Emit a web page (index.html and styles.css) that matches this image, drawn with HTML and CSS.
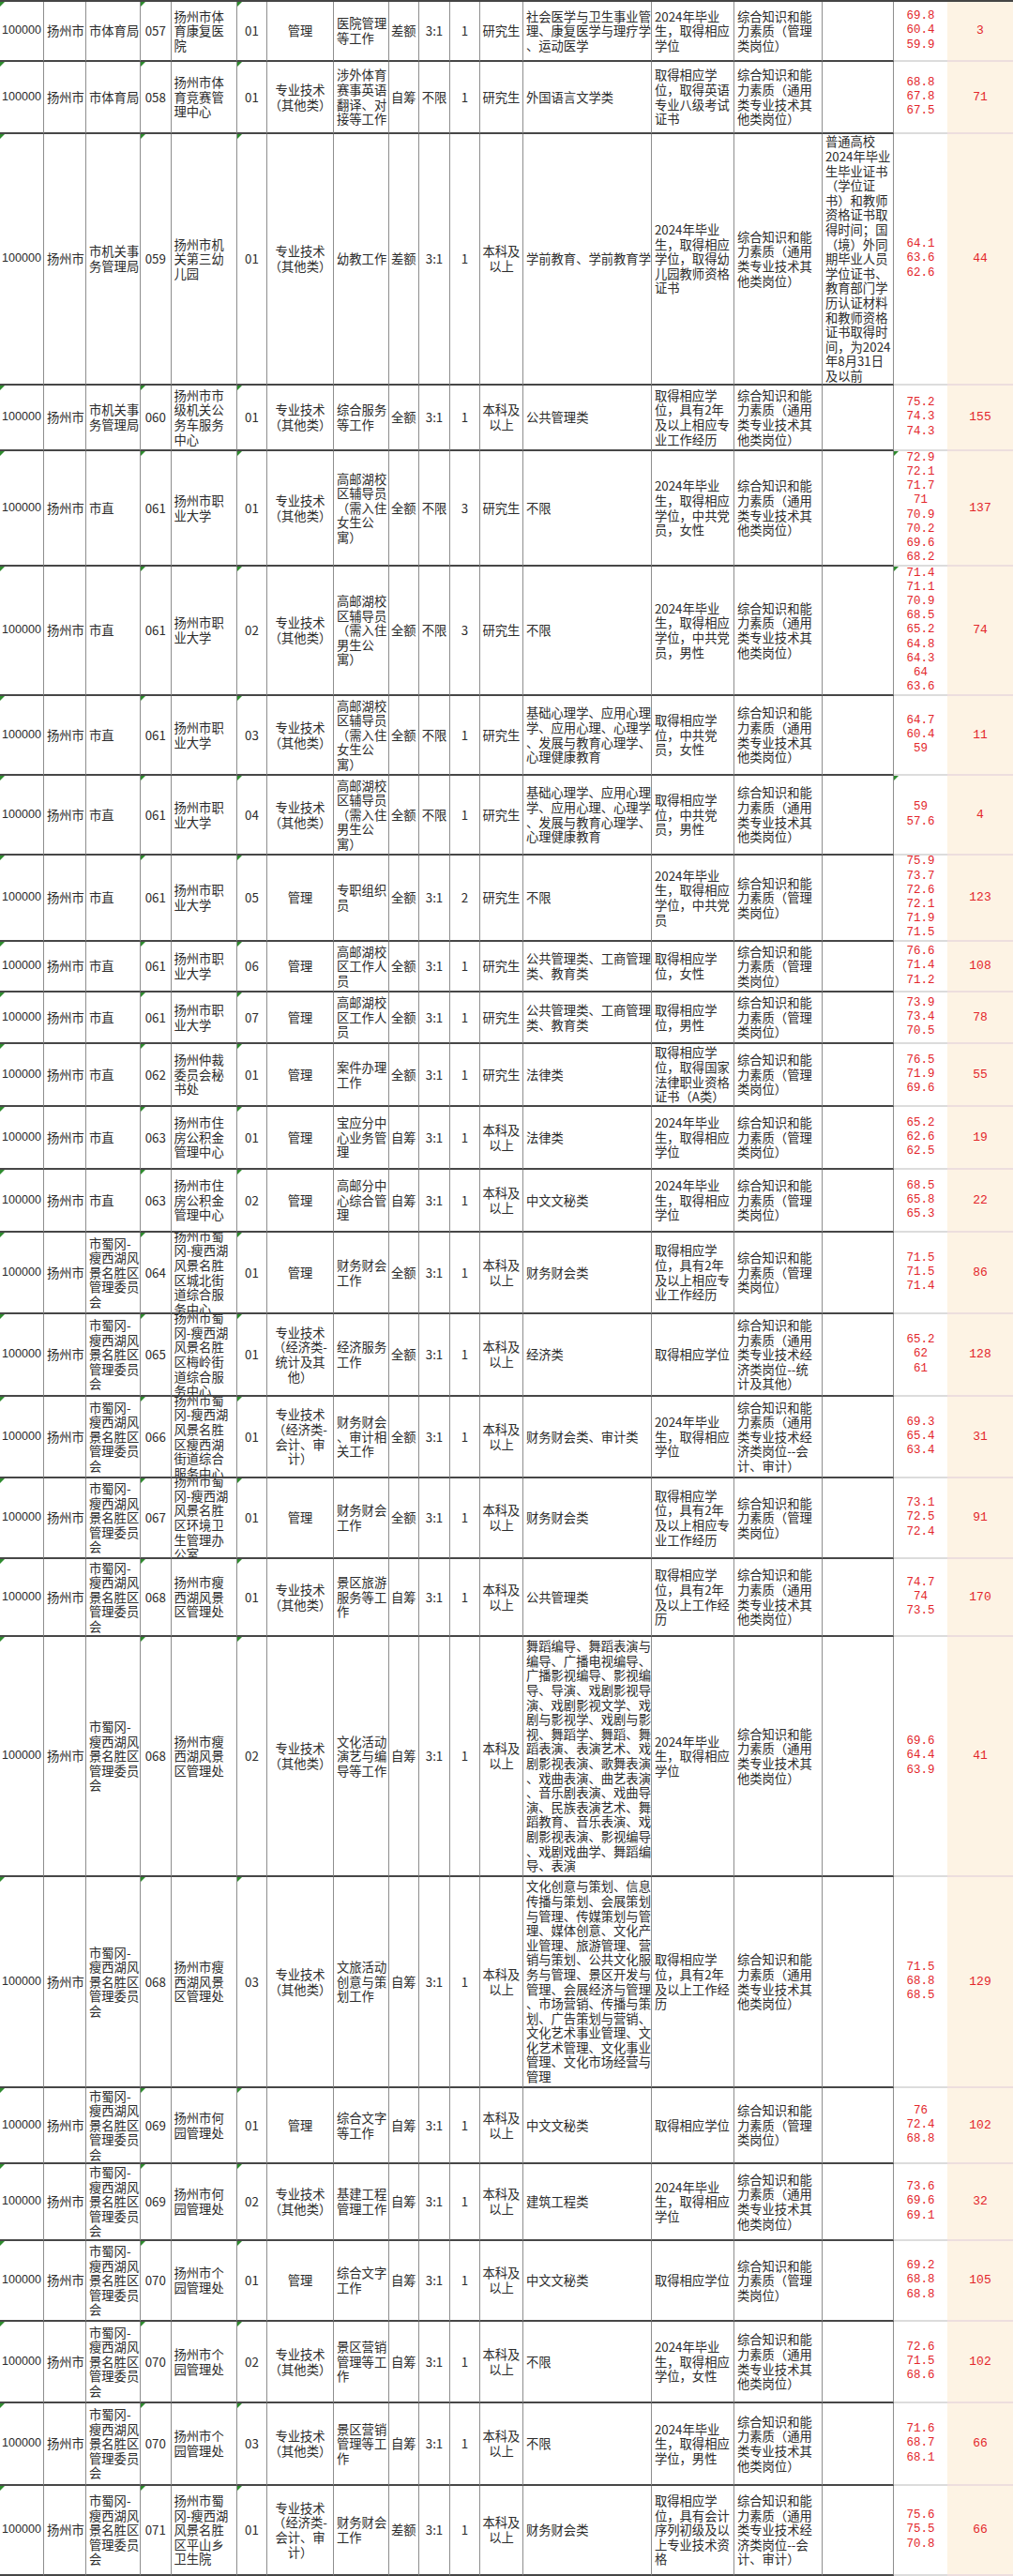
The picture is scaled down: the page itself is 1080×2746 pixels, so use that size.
FILE: index.html
```html
<!DOCTYPE html>
<html lang="zh-CN">
<head>
<meta charset="utf-8">
<title>岗位表</title>
<link rel="stylesheet" href="styles.css">
</head>
<body>
<div class="sheet">

<div class="row h64">
<div class="c m num">100000</div><div class="c">扬州市</div><div class="c">市体育局</div><div class="c m ct">057</div>
<div class="c">扬州市体<br>育康复医<br>院</div><div class="c m ct">01</div><div class="c ct">管理</div>
<div class="c">医院管理<br>等工作</div><div class="c ct">差额</div><div class="c ct">3:1</div><div class="c ct">1</div><div class="c ct">研究生</div>
<div class="c">社会医学与卫生事业管<br>理、康复医学与理疗学<br>、运动医学</div>
<div class="c">2024年毕业<br>生，取得相应<br>学位</div>
<div class="c">综合知识和能<br>力素质（管理<br>类岗位）</div><div class="c"></div>
<div class="c sc">69.8<br>60.4<br>59.9</div><div class="c cnt">3</div>
</div>

<div class="row h77">
<div class="c m num">100000</div><div class="c">扬州市</div><div class="c">市体育局</div><div class="c m ct">058</div>
<div class="c">扬州市体<br>育竞赛管<br>理中心</div><div class="c m ct">01</div><div class="c ct">专业技术<br>（其他类）</div>
<div class="c">涉外体育<br>赛事英语<br>翻译、对<br>接等工作</div><div class="c ct">自筹</div><div class="c ct">不限</div><div class="c ct">1</div><div class="c ct">研究生</div>
<div class="c">外国语言文学类</div>
<div class="c">取得相应学<br>位，取得英语<br>专业八级考试<br>证书</div>
<div class="c">综合知识和能<br>力素质（通用<br>类专业技术其<br>他类岗位）</div><div class="c"></div>
<div class="c sc">68.8<br>67.8<br>67.5</div><div class="c cnt">71</div>
</div>

<div class="row h268">
<div class="c m num">100000</div><div class="c">扬州市</div><div class="c">市机关事<br>务管理局</div><div class="c m ct">059</div>
<div class="c">扬州市机<br>关第三幼<br>儿园</div><div class="c m ct">01</div><div class="c ct">专业技术<br>（其他类）</div>
<div class="c">幼教工作</div><div class="c ct">差额</div><div class="c ct">3:1</div><div class="c ct">1</div><div class="c ct">本科及<br>以上</div>
<div class="c">学前教育、学前教育学</div>
<div class="c">2024年毕业<br>生，取得相应<br>学位，取得幼<br>儿园教师资格<br>证书</div>
<div class="c">综合知识和能<br>力素质（通用<br>类专业技术其<br>他类岗位）</div>
<div class="c">普通高校<br>2024年毕业<br>生毕业证书<br>（学位证<br>书）和教师<br>资格证书取<br>得时间；国<br>（境）外同<br>期毕业人员<br>学位证书、<br>教育部门学<br>历认证材料<br>和教师资格<br>证书取得时<br>间，为2024<br>年8月31日<br>及以前</div>
<div class="c sc">64.1<br>63.6<br>62.6</div><div class="c cnt">44</div>
</div>

<div class="row h70">
<div class="c m num">100000</div><div class="c">扬州市</div><div class="c">市机关事<br>务管理局</div><div class="c m ct">060</div>
<div class="c">扬州市市<br>级机关公<br>务车服务<br>中心</div><div class="c m ct">01</div><div class="c ct">专业技术<br>（其他类）</div>
<div class="c">综合服务<br>等工作</div><div class="c ct">全额</div><div class="c ct">3:1</div><div class="c ct">1</div><div class="c ct">本科及<br>以上</div>
<div class="c">公共管理类</div>
<div class="c">取得相应学<br>位，具有2年<br>及以上相应专<br>业工作经历</div>
<div class="c">综合知识和能<br>力素质（通用<br>类专业技术其<br>他类岗位）</div><div class="c"></div>
<div class="c sc">75.2<br>74.3<br>74.3</div><div class="c cnt">155</div>
</div>

<div class="row h123">
<div class="c m num">100000</div><div class="c">扬州市</div><div class="c">市直</div><div class="c m ct">061</div>
<div class="c">扬州市职<br>业大学</div><div class="c m ct">01</div><div class="c ct">专业技术<br>（其他类）</div>
<div class="c">高邮湖校<br>区辅导员<br>（需入住<br>女生公<br>寓）</div><div class="c ct">全额</div><div class="c ct">不限</div><div class="c ct">3</div><div class="c ct">研究生</div>
<div class="c">不限</div>
<div class="c">2024年毕业<br>生，取得相应<br>学位，中共党<br>员，女性</div>
<div class="c">综合知识和能<br>力素质（通用<br>类专业技术其<br>他类岗位）</div><div class="c"></div>
<div class="c sc m">72.9<br>72.1<br>71.7<br>71<br>70.9<br>70.2<br>69.6<br>68.2</div><div class="c cnt">137</div>
</div>

<div class="row h138">
<div class="c m num">100000</div><div class="c">扬州市</div><div class="c">市直</div><div class="c m ct">061</div>
<div class="c">扬州市职<br>业大学</div><div class="c m ct">02</div><div class="c ct">专业技术<br>（其他类）</div>
<div class="c">高邮湖校<br>区辅导员<br>（需入住<br>男生公<br>寓）</div><div class="c ct">全额</div><div class="c ct">不限</div><div class="c ct">3</div><div class="c ct">研究生</div>
<div class="c">不限</div>
<div class="c">2024年毕业<br>生，取得相应<br>学位，中共党<br>员，男性</div>
<div class="c">综合知识和能<br>力素质（通用<br>类专业技术其<br>他类岗位）</div><div class="c"></div>
<div class="c sc m">71.4<br>71.1<br>70.9<br>68.5<br>65.2<br>64.8<br>64.3<br>64<br>63.6</div><div class="c cnt">74</div>
</div>

<div class="row h85">
<div class="c m num">100000</div><div class="c">扬州市</div><div class="c">市直</div><div class="c m ct">061</div>
<div class="c">扬州市职<br>业大学</div><div class="c m ct">03</div><div class="c ct">专业技术<br>（其他类）</div>
<div class="c">高邮湖校<br>区辅导员<br>（需入住<br>女生公<br>寓）</div><div class="c ct">全额</div><div class="c ct">不限</div><div class="c ct">1</div><div class="c ct">研究生</div>
<div class="c">基础心理学、应用心理<br>学、应用心理、心理学<br>、发展与教育心理学、<br>心理健康教育</div>
<div class="c">取得相应学<br>位，中共党<br>员，女性</div>
<div class="c">综合知识和能<br>力素质（通用<br>类专业技术其<br>他类岗位）</div><div class="c"></div>
<div class="c sc">64.7<br>60.4<br>59</div><div class="c cnt">11</div>
</div>

<div class="row h85">
<div class="c m num">100000</div><div class="c">扬州市</div><div class="c">市直</div><div class="c m ct">061</div>
<div class="c">扬州市职<br>业大学</div><div class="c m ct">04</div><div class="c ct">专业技术<br>（其他类）</div>
<div class="c">高邮湖校<br>区辅导员<br>（需入住<br>男生公<br>寓）</div><div class="c ct">全额</div><div class="c ct">不限</div><div class="c ct">1</div><div class="c ct">研究生</div>
<div class="c">基础心理学、应用心理<br>学、应用心理、心理学<br>、发展与教育心理学、<br>心理健康教育</div>
<div class="c">取得相应学<br>位，中共党<br>员，男性</div>
<div class="c">综合知识和能<br>力素质（通用<br>类专业技术其<br>他类岗位）</div><div class="c"></div>
<div class="c sc m">59<br>57.6</div><div class="c cnt">4</div>
</div>

<div class="row h92">
<div class="c m num">100000</div><div class="c">扬州市</div><div class="c">市直</div><div class="c m ct">061</div>
<div class="c">扬州市职<br>业大学</div><div class="c m ct">05</div><div class="c ct">管理</div>
<div class="c">专职组织<br>员</div><div class="c ct">全额</div><div class="c ct">3:1</div><div class="c ct">2</div><div class="c ct">研究生</div>
<div class="c">不限</div>
<div class="c">2024年毕业<br>生，取得相应<br>学位，中共党<br>员</div>
<div class="c">综合知识和能<br>力素质（管理<br>类岗位）</div><div class="c"></div>
<div class="c sc">75.9<br>73.7<br>72.6<br>72.1<br>71.9<br>71.5</div><div class="c cnt">123</div>
</div>

<div class="row h54">
<div class="c m num">100000</div><div class="c">扬州市</div><div class="c">市直</div><div class="c m ct">061</div>
<div class="c">扬州市职<br>业大学</div><div class="c m ct">06</div><div class="c ct">管理</div>
<div class="c">高邮湖校<br>区工作人<br>员</div><div class="c ct">全额</div><div class="c ct">3:1</div><div class="c ct">1</div><div class="c ct">研究生</div>
<div class="c">公共管理类、工商管理<br>类、教育类</div>
<div class="c">取得相应学<br>位，女性</div>
<div class="c">综合知识和能<br>力素质（管理<br>类岗位）</div><div class="c"></div>
<div class="c sc">76.6<br>71.4<br>71.2</div><div class="c cnt">108</div>
</div>

<div class="row h55">
<div class="c m num">100000</div><div class="c">扬州市</div><div class="c">市直</div><div class="c m ct">061</div>
<div class="c">扬州市职<br>业大学</div><div class="c m ct">07</div><div class="c ct">管理</div>
<div class="c">高邮湖校<br>区工作人<br>员</div><div class="c ct">全额</div><div class="c ct">3:1</div><div class="c ct">1</div><div class="c ct">研究生</div>
<div class="c">公共管理类、工商管理<br>类、教育类</div>
<div class="c">取得相应学<br>位，男性</div>
<div class="c">综合知识和能<br>力素质（管理<br>类岗位）</div><div class="c"></div>
<div class="c sc">73.9<br>73.4<br>70.5</div><div class="c cnt">78</div>
</div>

<div class="row h67">
<div class="c m num">100000</div><div class="c">扬州市</div><div class="c">市直</div><div class="c m ct">062</div>
<div class="c">扬州仲裁<br>委员会秘<br>书处</div><div class="c m ct">01</div><div class="c ct">管理</div>
<div class="c">案件办理<br>工作</div><div class="c ct">全额</div><div class="c ct">3:1</div><div class="c ct">1</div><div class="c ct">研究生</div>
<div class="c">法律类</div>
<div class="c">取得相应学<br>位，取得国家<br>法律职业资格<br>证书（A类）</div>
<div class="c">综合知识和能<br>力素质（管理<br>类岗位）</div><div class="c"></div>
<div class="c sc">76.5<br>71.9<br>69.6</div><div class="c cnt">55</div>
</div>

<div class="row h67">
<div class="c m num">100000</div><div class="c">扬州市</div><div class="c">市直</div><div class="c m ct">063</div>
<div class="c">扬州市住<br>房公积金<br>管理中心</div><div class="c m ct">01</div><div class="c ct">管理</div>
<div class="c">宝应分中<br>心业务管<br>理</div><div class="c ct">自筹</div><div class="c ct">3:1</div><div class="c ct">1</div><div class="c ct">本科及<br>以上</div>
<div class="c">法律类</div>
<div class="c">2024年毕业<br>生，取得相应<br>学位</div>
<div class="c">综合知识和能<br>力素质（管理<br>类岗位）</div><div class="c"></div>
<div class="c sc">65.2<br>62.6<br>62.5</div><div class="c cnt">19</div>
</div>

<div class="row h67">
<div class="c m num">100000</div><div class="c">扬州市</div><div class="c">市直</div><div class="c m ct">063</div>
<div class="c">扬州市住<br>房公积金<br>管理中心</div><div class="c m ct">02</div><div class="c ct">管理</div>
<div class="c">高邮分中<br>心综合管<br>理</div><div class="c ct">自筹</div><div class="c ct">3:1</div><div class="c ct">1</div><div class="c ct">本科及<br>以上</div>
<div class="c">中文文秘类</div>
<div class="c">2024年毕业<br>生，取得相应<br>学位</div>
<div class="c">综合知识和能<br>力素质（管理<br>类岗位）</div><div class="c"></div>
<div class="c sc">68.5<br>65.8<br>65.3</div><div class="c cnt">22</div>
</div>

<div class="row h87">
<div class="c m num">100000</div><div class="c">扬州市</div><div class="c">市蜀冈-<br>瘦西湖风<br>景名胜区<br>管理委员<br>会</div><div class="c m ct">064</div>
<div class="c">扬州市蜀<br>冈-瘦西湖<br>风景名胜<br>区城北街<br>道综合服<br>务中心</div><div class="c m ct">01</div><div class="c ct">管理</div>
<div class="c">财务财会<br>工作</div><div class="c ct">全额</div><div class="c ct">3:1</div><div class="c ct">1</div><div class="c ct">本科及<br>以上</div>
<div class="c">财务财会类</div>
<div class="c">取得相应学<br>位，具有2年<br>及以上相应专<br>业工作经历</div>
<div class="c">综合知识和能<br>力素质（管理<br>类岗位）</div><div class="c"></div>
<div class="c sc">71.5<br>71.5<br>71.4</div><div class="c cnt">86</div>
</div>

<div class="row h88">
<div class="c m num">100000</div><div class="c">扬州市</div><div class="c">市蜀冈-<br>瘦西湖风<br>景名胜区<br>管理委员<br>会</div><div class="c m ct">065</div>
<div class="c">扬州市蜀<br>冈-瘦西湖<br>风景名胜<br>区梅岭街<br>道综合服<br>务中心</div><div class="c m ct">01</div><div class="c ct">专业技术<br>（经济类-<br>统计及其<br>他）</div>
<div class="c">经济服务<br>工作</div><div class="c ct">全额</div><div class="c ct">3:1</div><div class="c ct">1</div><div class="c ct">本科及<br>以上</div>
<div class="c">经济类</div>
<div class="c">取得相应学位</div>
<div class="c">综合知识和能<br>力素质（通用<br>类专业技术经<br>济类岗位--统<br>计及其他）</div><div class="c"></div>
<div class="c sc">65.2<br>62<br>61</div><div class="c cnt">128</div>
</div>

<div class="row h87">
<div class="c m num">100000</div><div class="c">扬州市</div><div class="c">市蜀冈-<br>瘦西湖风<br>景名胜区<br>管理委员<br>会</div><div class="c m ct">066</div>
<div class="c">扬州市蜀<br>冈-瘦西湖<br>风景名胜<br>区瘦西湖<br>街道综合<br>服务中心</div><div class="c m ct">01</div><div class="c ct">专业技术<br>（经济类-<br>会计、审<br>计）</div>
<div class="c">财务财会<br>、审计相<br>关工作</div><div class="c ct">全额</div><div class="c ct">3:1</div><div class="c ct">1</div><div class="c ct">本科及<br>以上</div>
<div class="c">财务财会类、审计类</div>
<div class="c">2024年毕业<br>生，取得相应<br>学位</div>
<div class="c">综合知识和能<br>力素质（通用<br>类专业技术经<br>济类岗位--会<br>计、审计）</div><div class="c"></div>
<div class="c sc">69.3<br>65.4<br>63.4</div><div class="c cnt">31</div>
</div>

<div class="row h86">
<div class="c m num">100000</div><div class="c">扬州市</div><div class="c">市蜀冈-<br>瘦西湖风<br>景名胜区<br>管理委员<br>会</div><div class="c m ct">067</div>
<div class="c">扬州市蜀<br>冈-瘦西湖<br>风景名胜<br>区环境卫<br>生管理办<br>公室</div><div class="c m ct">01</div><div class="c ct">管理</div>
<div class="c">财务财会<br>工作</div><div class="c ct">全额</div><div class="c ct">3:1</div><div class="c ct">1</div><div class="c ct">本科及<br>以上</div>
<div class="c">财务财会类</div>
<div class="c">取得相应学<br>位，具有2年<br>及以上相应专<br>业工作经历</div>
<div class="c">综合知识和能<br>力素质（管理<br>类岗位）</div><div class="c"></div>
<div class="c sc">73.1<br>72.5<br>72.4</div><div class="c cnt">91</div>
</div>

<div class="row h83">
<div class="c m num">100000</div><div class="c">扬州市</div><div class="c">市蜀冈-<br>瘦西湖风<br>景名胜区<br>管理委员<br>会</div><div class="c m ct">068</div>
<div class="c">扬州市瘦<br>西湖风景<br>区管理处</div><div class="c m ct">01</div><div class="c ct">专业技术<br>（其他类）</div>
<div class="c">景区旅游<br>服务等工<br>作</div><div class="c ct">自筹</div><div class="c ct">3:1</div><div class="c ct">1</div><div class="c ct">本科及<br>以上</div>
<div class="c">公共管理类</div>
<div class="c">取得相应学<br>位，具有2年<br>及以上工作经<br>历</div>
<div class="c">综合知识和能<br>力素质（通用<br>类专业技术其<br>他类岗位）</div><div class="c"></div>
<div class="c sc">74.7<br>74<br>73.5</div><div class="c cnt">170</div>
</div>

<div class="row h256">
<div class="c m num">100000</div><div class="c">扬州市</div><div class="c">市蜀冈-<br>瘦西湖风<br>景名胜区<br>管理委员<br>会</div><div class="c m ct">068</div>
<div class="c">扬州市瘦<br>西湖风景<br>区管理处</div><div class="c m ct">02</div><div class="c ct">专业技术<br>（其他类）</div>
<div class="c">文化活动<br>演艺与编<br>导等工作</div><div class="c ct">自筹</div><div class="c ct">3:1</div><div class="c ct">1</div><div class="c ct">本科及<br>以上</div>
<div class="c">舞蹈编导、舞蹈表演与<br>编导、广播电视编导、<br>广播影视编导、影视编<br>导、导演、戏剧影视导<br>演、戏剧影视文学、戏<br>剧与影视学、戏剧与影<br>视、舞蹈学、舞蹈、舞<br>蹈表演、表演艺术、戏<br>剧影视表演、歌舞表演<br>、戏曲表演、曲艺表演<br>、音乐剧表演、戏曲导<br>演、民族表演艺术、舞<br>蹈教育、音乐表演、戏<br>剧影视表演、影视编导<br>、戏剧戏曲学、舞蹈编<br>导、表演</div>
<div class="c">2024年毕业<br>生，取得相应<br>学位</div>
<div class="c">综合知识和能<br>力素质（通用<br>类专业技术其<br>他类岗位）</div><div class="c"></div>
<div class="c sc">69.6<br>64.4<br>63.9</div><div class="c cnt">41</div>
</div>

<div class="row h225">
<div class="c m num">100000</div><div class="c">扬州市</div><div class="c">市蜀冈-<br>瘦西湖风<br>景名胜区<br>管理委员<br>会</div><div class="c m ct">068</div>
<div class="c">扬州市瘦<br>西湖风景<br>区管理处</div><div class="c m ct">03</div><div class="c ct">专业技术<br>（其他类）</div>
<div class="c">文旅活动<br>创意与策<br>划工作</div><div class="c ct">自筹</div><div class="c ct">3:1</div><div class="c ct">1</div><div class="c ct">本科及<br>以上</div>
<div class="c">文化创意与策划、信息<br>传播与策划、会展策划<br>与管理、传媒策划与管<br>理、媒体创意、文化产<br>业管理、旅游管理、营<br>销与策划、公共文化服<br>务与管理、景区开发与<br>管理、会展经济与管理<br>、市场营销、传播与策<br>划、广告策划与营销、<br>文化艺术事业管理、文<br>化艺术管理、文化事业<br>管理、文化市场经营与<br>管理</div>
<div class="c">取得相应学<br>位，具有2年<br>及以上工作经<br>历</div>
<div class="c">综合知识和能<br>力素质（通用<br>类专业技术其<br>他类岗位）</div><div class="c"></div>
<div class="c sc">71.5<br>68.8<br>68.5</div><div class="c cnt">129</div>
</div>

<div class="row h81">
<div class="c m num">100000</div><div class="c">扬州市</div><div class="c">市蜀冈-<br>瘦西湖风<br>景名胜区<br>管理委员<br>会</div><div class="c m ct">069</div>
<div class="c">扬州市何<br>园管理处</div><div class="c m ct">01</div><div class="c ct">管理</div>
<div class="c">综合文字<br>等工作</div><div class="c ct">自筹</div><div class="c ct">3:1</div><div class="c ct">1</div><div class="c ct">本科及<br>以上</div>
<div class="c">中文文秘类</div>
<div class="c">取得相应学位</div>
<div class="c">综合知识和能<br>力素质（管理<br>类岗位）</div><div class="c"></div>
<div class="c sc">76<br>72.4<br>68.8</div><div class="c cnt">102</div>
</div>

<div class="row h82">
<div class="c m num">100000</div><div class="c">扬州市</div><div class="c">市蜀冈-<br>瘦西湖风<br>景名胜区<br>管理委员<br>会</div><div class="c m ct">069</div>
<div class="c">扬州市何<br>园管理处</div><div class="c m ct">02</div><div class="c ct">专业技术<br>（其他类）</div>
<div class="c">基建工程<br>管理工作</div><div class="c ct">自筹</div><div class="c ct">3:1</div><div class="c ct">1</div><div class="c ct">本科及<br>以上</div>
<div class="c">建筑工程类</div>
<div class="c">2024年毕业<br>生，取得相应<br>学位</div>
<div class="c">综合知识和能<br>力素质（通用<br>类专业技术其<br>他类岗位）</div><div class="c"></div>
<div class="c sc">73.6<br>69.6<br>69.1</div><div class="c cnt">32</div>
</div>

<div class="row h86">
<div class="c m num">100000</div><div class="c">扬州市</div><div class="c">市蜀冈-<br>瘦西湖风<br>景名胜区<br>管理委员<br>会</div><div class="c m ct">070</div>
<div class="c">扬州市个<br>园管理处</div><div class="c m ct">01</div><div class="c ct">管理</div>
<div class="c">综合文字<br>工作</div><div class="c ct">自筹</div><div class="c ct">3:1</div><div class="c ct">1</div><div class="c ct">本科及<br>以上</div>
<div class="c">中文文秘类</div>
<div class="c">取得相应学位</div>
<div class="c">综合知识和能<br>力素质（管理<br>类岗位）</div><div class="c"></div>
<div class="c sc">69.2<br>68.8<br>68.8</div><div class="c cnt">105</div>
</div>

<div class="row h87">
<div class="c m num">100000</div><div class="c">扬州市</div><div class="c">市蜀冈-<br>瘦西湖风<br>景名胜区<br>管理委员<br>会</div><div class="c m ct">070</div>
<div class="c">扬州市个<br>园管理处</div><div class="c m ct">02</div><div class="c ct">专业技术<br>（其他类）</div>
<div class="c">景区营销<br>管理等工<br>作</div><div class="c ct">自筹</div><div class="c ct">3:1</div><div class="c ct">1</div><div class="c ct">本科及<br>以上</div>
<div class="c">不限</div>
<div class="c">2024年毕业<br>生，取得相应<br>学位，女性</div>
<div class="c">综合知识和能<br>力素质（通用<br>类专业技术其<br>他类岗位）</div><div class="c"></div>
<div class="c sc">72.6<br>71.5<br>68.6</div><div class="c cnt">102</div>
</div>

<div class="row h88">
<div class="c m num">100000</div><div class="c">扬州市</div><div class="c">市蜀冈-<br>瘦西湖风<br>景名胜区<br>管理委员<br>会</div><div class="c m ct">070</div>
<div class="c">扬州市个<br>园管理处</div><div class="c m ct">03</div><div class="c ct">专业技术<br>（其他类）</div>
<div class="c">景区营销<br>管理等工<br>作</div><div class="c ct">自筹</div><div class="c ct">3:1</div><div class="c ct">1</div><div class="c ct">本科及<br>以上</div>
<div class="c">不限</div>
<div class="c">2024年毕业<br>生，取得相应<br>学位，男性</div>
<div class="c">综合知识和能<br>力素质（通用<br>类专业技术其<br>他类岗位）</div><div class="c"></div>
<div class="c sc">71.6<br>68.7<br>68.1</div><div class="c cnt">66</div>
</div>

<div class="row h96">
<div class="c m num">100000</div><div class="c">扬州市</div><div class="c">市蜀冈-<br>瘦西湖风<br>景名胜区<br>管理委员<br>会</div><div class="c m ct">071</div>
<div class="c">扬州市蜀<br>冈-瘦西湖<br>风景名胜<br>区平山乡<br>卫生院</div><div class="c m ct">01</div><div class="c ct">专业技术<br>（经济类-<br>会计、审<br>计）</div>
<div class="c">财务财会<br>工作</div><div class="c ct">差额</div><div class="c ct">3:1</div><div class="c ct">1</div><div class="c ct">本科及<br>以上</div>
<div class="c">财务财会类</div>
<div class="c">取得相应学<br>位，具有会计<br>序列初级及以<br>上专业技术资<br>格</div>
<div class="c">综合知识和能<br>力素质（通用<br>类专业技术经<br>济类岗位--会<br>计、审计）</div><div class="c"></div>
<div class="c sc">75.6<br>75.5<br>70.8</div><div class="c cnt">66</div>
</div>

</div>
</body>
</html>
```

FILE: styles.css
```css
* {
  box-sizing: border-box;
}

body {
  margin: 0;
  background: #ffffff;
  font-family: "Noto Sans CJK SC", "Noto Sans", sans-serif;
  font-size: 13.3px;
  line-height: 15.6px;
  color: #2b2b2b;
}

.sheet {
  width: 1080px;
  border-top: 2px solid #454545;
}

.row {
  display: grid;
  grid-template-columns: 47px 45px 58px 32.5px 70.5px 32px 71px 58.6px 32.4px 33px 32px 46px 137px 88px 94px 76px 57px 70px;
}

.h54 { height: 54px; }
.h55 { height: 55px; }
.h64 { height: 64px; }
.h67 { height: 67px; }
.h70 { height: 70px; }
.h77 { height: 77px; }
.h81 { height: 81px; }
.h82 { height: 82px; }
.h83 { height: 83px; }
.h85 { height: 85px; }
.h86 { height: 86px; }
.h87 { height: 87px; }
.h88 { height: 88px; }
.h92 { height: 92px; }
.h96 { height: 96px; }
.h123 { height: 123px; }
.h138 { height: 138px; }
.h225 { height: 225px; }
.h256 { height: 256px; }
.h268 { height: 268px; }

.c {
  position: relative;
  display: flex;
  align-items: center;
  overflow: hidden;
  white-space: nowrap;
  padding-left: 3px;
  border-right: 1px solid #8e8e8e;
  border-bottom: 2px solid #474747;
}

.num {
  padding-left: 2px;
  font-family: "Liberation Sans", "Noto Sans", sans-serif;
  font-size: 12.6px;
}

.ct {
  justify-content: center;
  text-align: center;
  padding-left: 0;
}

.m::before {
  content: "";
  position: absolute;
  top: 0;
  left: 0;
  border-top: 5px solid #2e8b2e;
  border-right: 5px solid transparent;
}

.sc {
  justify-content: center;
  text-align: center;
  padding-left: 0;
  font-family: "Liberation Mono", "DejaVu Sans Mono", monospace;
  font-size: 12.5px;
  line-height: 15.2px;
  color: #e3262b;
  border-right: 0;
  border-bottom: 2px solid #dcdcdc;
}

.cnt {
  justify-content: center;
  padding-left: 0;
  background: #fdf3e4;
  font-family: "Liberation Mono", "DejaVu Sans Mono", monospace;
  font-size: 13px;
  color: #e3262b;
  border-right: 0;
  border-bottom: 2px solid #eddede;
}
```
